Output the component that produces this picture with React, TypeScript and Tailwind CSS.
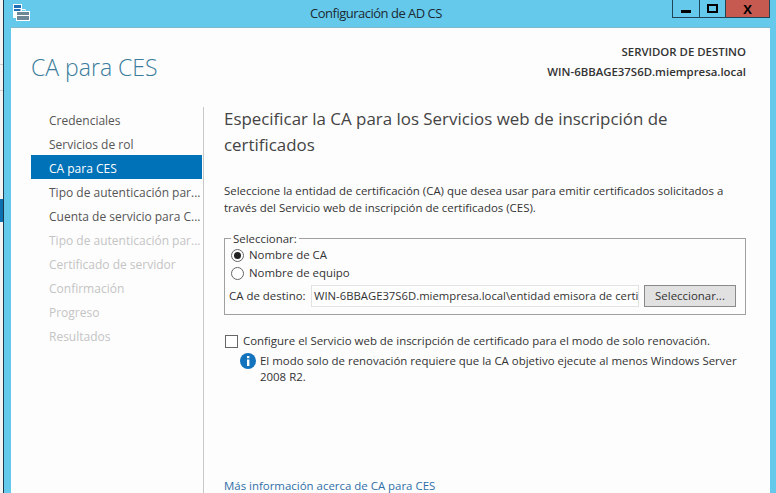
import React from 'react';

const steps = [
  { label: 'Credenciales', state: 'done' },
  { label: 'Servicios de rol', state: 'done' },
  { label: 'CA para CES', state: 'active' },
  { label: 'Tipo de autenticación par...', state: 'done' },
  { label: 'Cuenta de servicio para C...', state: 'done' },
  { label: 'Tipo de autenticación par...', state: 'off' },
  { label: 'Certificado de servidor', state: 'off' },
  { label: 'Confirmación', state: 'off' },
  { label: 'Progreso', state: 'off' },
  { label: 'Resultados', state: 'off' },
];

function AppIcon() {
  return (
    <svg width="17" height="17" viewBox="0 0 17 17" className="mt-[4px] shrink-0">
      <rect x="0" y="0" width="9" height="14" fill="#fff" />
      <rect x="1" y="1" width="7" height="3" fill="#1f6fb5" />
      <rect x="1" y="5" width="7" height="2" fill="#1f6fb5" />
      <rect x="3.5" y="7.5" width="13" height="9" fill="#6d8797" stroke="#fff" />
      <rect x="8" y="5.5" width="4" height="2" fill="none" stroke="#fff" />
      <rect x="4" y="11" width="12" height="1" fill="#fff" />
    </svg>
  );
}

function InfoIcon() {
  return (
    <svg width="16" height="16" viewBox="0 0 16 16" className="shrink-0">
      <circle cx="8" cy="8" r="8" fill="#1374bd" />
      <rect x="7" y="3" width="2.4" height="2.2" fill="#fff" />
      <rect x="7" y="6.5" width="2.4" height="6.5" fill="#fff" />
    </svg>
  );
}

export default function App() {
  return (
    <div
      className="flex h-[493px] w-[776px] overflow-hidden bg-[#65c9ec] text-[12px] text-[#444]"
      style={{ fontFamily: '"Open Sans", "Noto Sans", sans-serif' }}
    >
      {/* trozo del escritorio que asoma a la izquierda */}
      <div className="flex w-[3px] shrink-0 flex-col bg-[#f4f4f4]">
        <div className="h-[64px]" />
        <div className="h-px bg-[#cfcfcf]" />
        <div className="h-[25px]" />
        <div className="h-px bg-[#cfcfcf]" />
        <div className="h-[108px]" />
        <div className="h-[23px] bg-[#0b6fb0]" />
      </div>
      <div className="w-px shrink-0 bg-[#1d3a4c]" />

      <div className="flex min-w-0 flex-1 flex-col">
        <header className="relative flex h-[27px] shrink-0 items-start">
          <div className="ml-[9px]">
            <AppIcon />
          </div>
          <h1 className="absolute left-0 right-[28px] top-[4px] text-center text-[13px] leading-[19px] tracking-[-0.5px] text-[#1b2a33]">
            Configuración de AD CS
          </h1>
          <div className="ml-auto mr-[6px] flex h-[18px] border-x border-b border-[#1f4658]">
            <div className="flex w-[27px] items-end justify-center border-r border-[#1f4658] pb-[4px]">
              <div className="h-[3px] w-[10px] bg-black" />
            </div>
            <div className="flex w-[26px] items-center justify-center border-r border-[#1f4658] pb-px">
              <div className="h-[9px] w-[11px] border-2 border-black" />
            </div>
            <div className="flex w-[43px] items-center justify-center bg-[#c75a50] text-[13px] font-bold leading-[16px] text-black">
              X
            </div>
          </div>
        </header>

        <div className="ml-[7px] mr-[6px] flex min-h-0 flex-1 flex-col border-t border-[#7db7ca] bg-[#fdfdfd]">
          <div className="flex h-[79px] shrink-0 justify-between pl-[20px] pr-[24px]">
            <h2 className="mt-[24px] text-[23px] font-light leading-[30px] text-[#3b7c9c]">CA para CES</h2>
            <div className="mt-[14px] text-right text-[11.4px] font-semibold leading-[20px] text-[#333]">
              <div>SERVIDOR DE DESTINO</div>
              <div>WIN-6BBAGE37S6D.miempresa.local</div>
            </div>
          </div>

          <div className="flex min-h-0 flex-1">
            <nav className="ml-[20px] w-[171px] shrink-0">
              {steps.map((step, i) => (
                <div
                  key={i}
                  className={
                    'flex h-[24px] items-center overflow-hidden whitespace-nowrap pl-[18px] pt-[4px] ' +
                    (step.state === 'active'
                      ? 'bg-[#0072b8] text-white'
                      : step.state === 'off'
                        ? 'text-[#c4c4c4]'
                        : 'text-[#555]')
                  }
                >
                  {step.label}
                </div>
              ))}
            </nav>
            <div className="ml-px w-px shrink-0 bg-[#c8c8c8]" />

            <main className="flex min-w-0 flex-1 flex-col pl-[20px] pr-[24px]">
              <h3 className="mt-[-1px] text-[16.9px] leading-[26px] text-[#444]">
                Especificar la CA para los Servicios web de inscripción de certificados
              </h3>
              <p className="mt-[24px] text-[11.44px] leading-[17px] text-[#333]">
                Seleccione la entidad de certificación (CA) que desea usar para emitir certificados solicitados a
                través del Servicio web de inscripción de certificados (CES).
              </p>

              <fieldset className="mt-[15px] h-[84px] border border-[#a0a0a0] px-[4px]">
                <legend className="ml-[2px] bg-[#fdfdfd] px-[2px] text-[11.44px] leading-[15px] text-[#333]">
                  Seleccionar:
                </legend>
                <label className="flex h-[18px] items-center gap-[5px] pl-[2px]">
                  <span className="flex h-[13px] w-[13px] items-center justify-center rounded-full border border-[#666] bg-white">
                    <span className="h-[7px] w-[7px] rounded-full bg-[#222]" />
                  </span>
                  <span className="text-[11.44px] text-[#333]">Nombre de CA</span>
                </label>
                <label className="flex h-[18px] items-center gap-[5px] pl-[2px]">
                  <span className="h-[13px] w-[13px] rounded-full border border-[#666] bg-white" />
                  <span className="text-[11.44px] text-[#333]">Nombre de equipo</span>
                </label>
                <div className="mt-[3px] flex items-center">
                  <span className="w-[82px] shrink-0 whitespace-nowrap text-[11.44px] text-[#333]">CA de destino:</span>
                  <div className="h-[22px] w-[328px] overflow-hidden whitespace-nowrap border border-[#e3e3e3] bg-white pl-[2px] text-[11.3px] leading-[20px] text-[#333]">
                    WIN-6BBAGE37S6D.miempresa.local\entidad emisora de certi
                  </div>
                  <button className="ml-[5px] h-[22px] w-[92px] border border-[#8a8a8a] bg-[#e1e1e1] text-[11.44px] text-[#333]">
                    Seleccionar...
                  </button>
                </div>
              </fieldset>

              <label className="mt-[18px] flex items-center gap-[5px] pl-px">
                <span className="h-[13px] w-[13px] shrink-0 border border-[#666] bg-white" />
                <span className="whitespace-nowrap text-[11.44px] leading-[16px] text-[#333]">
                  Configure el Servicio web de inscripción de certificado para el modo de solo renovación.
                </span>
              </label>
              <div className="mt-[4px] flex gap-[4px] pl-[16px]">
                <InfoIcon />
                <p className="text-[11.44px] leading-[16px] text-[#333]">
                  El modo solo de renovación requiere que la CA objetivo ejecute al menos Windows Server 2008 R2.
                </p>
              </div>

              <a className="mb-[-1px] mt-auto text-[11.44px] leading-[16px] text-[#2f6fa8]">Más información acerca de CA para CES</a>
            </main>
          </div>
        </div>
      </div>
    </div>
  );
}
